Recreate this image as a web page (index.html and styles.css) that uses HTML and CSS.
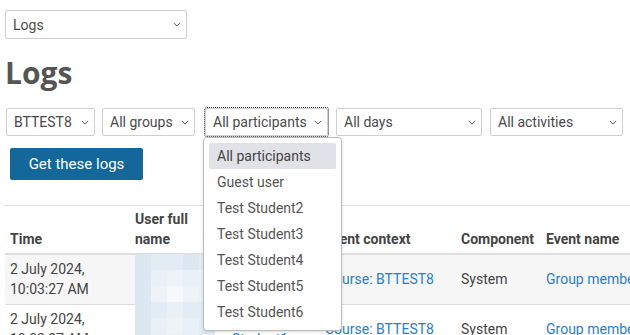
FILE: index.html
```html
<!DOCTYPE html>
<html>
<head>
<meta charset="utf-8">
<link rel="stylesheet" href="styles.css">
</head>
<body>
<div class="page">
  <div class="sel sel-top"><span>Logs</span><svg class="chev" viewBox="0 0 10 6"><path d="M1 1l4 4 4-4"/></svg></div>
  <h1 class="title">Logs</h1>
  <div class="filters">
    <div class="sel f1"><span>BTTEST8</span><svg class="chev" viewBox="0 0 10 6"><path d="M1 1l4 4 4-4"/></svg></div>
    <div class="sel f2"><span>All groups</span><svg class="chev" viewBox="0 0 10 6"><path d="M1 1l4 4 4-4"/></svg></div>
    <div class="sel f3 focus"><span>All participants</span><svg class="chev" viewBox="0 0 10 6"><path d="M1 1l4 4 4-4"/></svg></div>
    <div class="sel f4"><span>All days</span><svg class="chev" viewBox="0 0 10 6"><path d="M1 1l4 4 4-4"/></svg></div>
    <div class="sel f5"><span>All activities</span><svg class="chev" viewBox="0 0 10 6"><path d="M1 1l4 4 4-4"/></svg></div>
  </div>
  <button class="btn">Get these logs</button>
  <table class="logs">
    <thead>
      <tr>
        <th class="c-time">Time</th>
        <th class="c-user">User full name</th>
        <th class="c-aff">Affected user</th>
        <th class="c-ctx">Event context</th>
        <th class="c-comp">Component</th>
        <th class="c-ev">Event name</th>
      </tr>
    </thead>
    <tbody>
      <tr class="odd">
        <td>2 July 2024,<br>10:03:27 AM</td>
        <td></td>
        <td><a>Test Student1</a></td>
        <td><a>Course: BTTEST8</a></td>
        <td>System</td>
        <td class="nowrap"><a>Group member added</a></td>
      </tr>
      <tr>
        <td>2 July 2024,<br>10:03:27 AM</td>
        <td></td>
        <td><a>Test Student1</a></td>
        <td><a>Course: BTTEST8</a></td>
        <td>System</td>
        <td class="nowrap"><a>Group member added</a></td>
      </tr>
    </tbody>
  </table>
  <div class="mosaic">
    <i class="m1"></i><i class="m2"></i><i class="m2"></i><i class="m1"></i><i class="m2"></i>
    <i class="m1"></i><i class="m3"></i><i class="m4"></i><i class="m3"></i><i class="m3"></i>
    <i class="m1"></i><i class="m4"></i><i class="m5"></i><i class="m4"></i><i class="m3"></i>
    <i class="m1"></i><i class="m2"></i><i class="m3"></i><i class="m2"></i><i class="m2"></i>
    <i class="m1"></i><i class="m3"></i><i class="m4"></i><i class="m3"></i><i class="m2"></i>
    <i class="m1"></i><i class="m2"></i><i class="m3"></i><i class="m2"></i><i class="m2"></i>
  </div>
  <ul class="dropdown">
    <li class="active">All participants</li>
    <li>Guest user</li>
    <li>Test Student2</li>
    <li>Test Student3</li>
    <li>Test Student4</li>
    <li>Test Student5</li>
    <li>Test Student6</li>
  </ul>
</div>
</body>
</html>
```
FILE: styles.css
```css
html, body {
  margin: 0;
  padding: 0;
  background: #fff;
  overflow: hidden;
}
body {
  width: 630px;
  height: 335px;
  font-family: Roboto, "Liberation Sans", sans-serif;
  font-size: 14px;
  color: #444;
}
.page {
  position: relative;
  padding: 10px 0 0 5px;
}
.sel {
  box-sizing: border-box;
  height: 28px;
  border: 1px solid #cfcfcf;
  border-radius: 2px;
  display: flex;
  align-items: center;
  justify-content: space-between;
  padding: 0 5px 0 7px;
  color: #4a4a4a;
  font-size: 14px;
  background: #fff;
}
.chev {
  width: 8px;
  height: 5px;
  fill: none;
  stroke: #555;
  stroke-width: 1.2;
}
.sel-top {
  width: 182px;
  height: 29px;
}
.title {
  font-family: "Open Sans", "Noto Sans", sans-serif;
  font-weight: 700;
  font-size: 30px;
  line-height: 40px;
  color: #555;
  margin: 14px 0 15px 0;
}
.filters {
  display: flex;
  padding-left: 1px;
}
.f1 { width: 89px; }
.f2 { width: 93px; margin-left: 7px; }
.f3 { width: 123px; margin-left: 10px; }
.f4 { width: 146px; margin-left: 8px; }
.f5 { width: 133px; margin-left: 8px; }
.focus {
  outline: 1px dotted #333;
  outline-offset: 0;
}
.btn {
  display: block;
  margin: 12px 0 0 5px;
  width: 133px;
  height: 32px;
  border: 0;
  border-radius: 2px;
  background: #13679a;
  color: #fff;
  font-family: Roboto, "Liberation Sans", sans-serif;
  font-size: 15px;
  padding: 0;
}
.logs {
  margin-top: 25px;
  border-collapse: collapse;
  table-layout: fixed;
  width: 736px;
  border-top: 1px solid #dedede;
}
.logs th, .logs td {
  text-align: left;
  line-height: 20px;
}
.logs th {
  padding: 3px 5px 4px 5px;
  vertical-align: bottom;
  font-weight: 700;
  color: #444;
  border-bottom: 2px solid #dedede;
}
.logs td {
  vertical-align: middle;
  padding: 4px 5px 5px 5px;
  border-bottom: 1px solid #dedede;
}
.logs tr.odd td {
  background: #f6f6f6;
}
.c-time { width: 115px; }
.c-user { width: 87px; }
.c-aff { width: 83px; }
.c-ctx { width: 126px; }
.c-comp { width: 75px; }
.c-ev { width: 190px; }
.logs a {
  color: #2b80c5;
}
.nowrap { white-space: nowrap; }
.mosaic {
  position: absolute;
  left: 135px;
  top: 254px;
  display: grid;
  grid-template-columns: repeat(5, 16px);
  grid-auto-rows: 16px;
}
.mosaic i { display: block; }
.m1 { background: #dbe7f1; }
.m2 { background: #e2ecf4; }
.m3 { background: #e9f0f6; }
.m4 { background: #eef3f8; }
.m5 { background: #f6f8fb; }
.dropdown {
  position: absolute;
  left: 203px;
  top: 137px;
  width: 139px;
  box-sizing: border-box;
  margin: 0;
  padding: 5px;
  list-style: none;
  background: #fff;
  border: 1px solid #bdbdbd;
  border-radius: 4px;
  box-shadow: 0 1px 3px rgba(0,0,0,0.15);
}
.dropdown li {
  height: 26px;
  line-height: 26px;
  padding-left: 8px;
  color: #555;
  font-size: 14px;
  border-radius: 2px;
}
.dropdown li.active {
  background: #e1e1e8;
  color: #444;
}
```
